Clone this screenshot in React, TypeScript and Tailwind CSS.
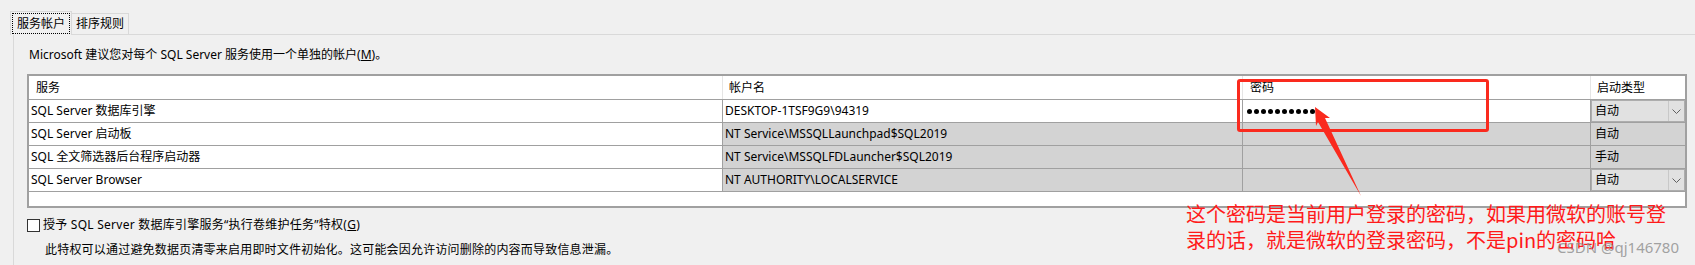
import React from "react";

type Row = {
  svc: string;
  acct: string;
  pwd?: boolean;
  start: string;
  combo?: boolean;
  gray?: boolean;
};

const rows: Row[] = [
  { svc: "SQL Server 数据库引擎", acct: "DESKTOP-1TSF9G9\\94319", pwd: true, start: "自动", combo: true },
  { svc: "SQL Server 启动板", acct: "NT Service\\MSSQLLaunchpad$SQL2019", start: "自动", gray: true },
  { svc: "SQL 全文筛选器后台程序启动器", acct: "NT Service\\MSSQLFDLauncher$SQL2019", start: "手动", gray: true },
  { svc: "SQL Server Browser", acct: "NT AUTHORITY\\LOCALSERVICE", start: "自动", combo: true, gray: true },
];

function Combo({ value }: { value: string }) {
  return (
    <div className="flex h-full w-full border border-[#adadad] bg-[#e1e1e1]">
      <div className="flex flex-1 items-center pl-[3px]">{value}</div>
      <div className="flex w-[16px] items-center justify-center border-l border-[#c8c8c8]">
        <svg width="9" height="5" viewBox="0 0 9 5">
          <path d="M0.5 0.5 L4.5 4.5 L8.5 0.5" fill="none" stroke="#606060" strokeWidth="1" />
        </svg>
      </div>
    </div>
  );
}

function Table() {
  return (
    <div className="flex h-[134px] w-[1660px] flex-col border-2 border-[#a0a0a0] bg-white">
      {/* header */}
      <div className="grid h-[24px] grid-cols-[694px_520px_348px_94px] border-b border-[#a0a0a0]">
        <div className="flex items-center border-r border-[#e5e5e5] pl-[7px]">服务</div>
        <div className="flex items-center border-r border-[#e5e5e5] pl-[6px]">帐户名</div>
        <div className="flex items-center border-r border-[#e5e5e5] pl-[7px]">密码</div>
        <div className="flex items-center pl-[6px]">启动类型</div>
      </div>
      {rows.map((r) => (
        <div
          key={r.svc}
          className="grid h-[23px] grid-cols-[694px_520px_348px_94px] border-b border-[#a0a0a0]"
        >
          <div className="flex items-center border-r border-[#a0a0a0] pl-[2px]">{r.svc}</div>
          <div className={`flex items-center border-r border-[#a0a0a0] pl-[2px] ${r.gray ? "bg-[#d3d3d3]" : ""}`}>
            {r.acct}
          </div>
          <div className={`flex items-center border-r border-[#a0a0a0] pl-[4px] ${r.gray ? "bg-[#d3d3d3]" : ""}`}>
            {r.pwd && (
              <div className="flex gap-[2px]">
                {Array.from({ length: 10 }).map((_, i) => (
                  <span key={i} className="block h-[5px] w-[5px] rounded-full bg-black" />
                ))}
              </div>
            )}
          </div>
          <div className={`flex items-center ${r.gray ? "bg-[#d3d3d3]" : ""}`}>
            {r.combo ? <Combo value={r.start} /> : <span className="pl-[4px]">{r.start}</span>}
          </div>
        </div>
      ))}
    </div>
  );
}

export default function App() {
  return (
    <div className="relative h-[265px] w-[1695px] overflow-hidden bg-[#f0f0f0] font-['Noto_Sans','Noto_Sans_CJK_SC',sans-serif] text-[12px] leading-[16px] text-black">
      {/* tabs */}
      <div className="flex items-end pl-[10px] pt-[11px]">
        <div className="relative z-10 -mb-px h-[24px] w-[62px] border border-b-0 border-[#d9d9d9] bg-[#f0f0f0] p-[1px]">
          <div className="flex h-[21px] items-center justify-center border border-dotted border-black">
            服务帐户
          </div>
        </div>
        <div className="flex h-[21px] w-[57px] items-center justify-center border border-b-0 border-l-0 border-[#d9d9d9]">
          排序规则
        </div>
      </div>

      {/* panel */}
      <div className="ml-[13px] h-[240px] border-l border-t border-[#d9d9d9] pl-[13px]">
        <p className="ml-[2px] mt-[12px]">
          Microsoft 建议您对每个 SQL Server 服务使用一个单独的帐户(<span className="underline">M</span>)。
        </p>
        <div className="mt-[11px]">
          <Table />
        </div>
        <div className="mt-[9px] flex items-center gap-[3px]">
          <span className="block h-[13px] w-[13px] border border-[#333333] bg-white" />
          <span className="tracking-[0.25px]">
            授予 SQL Server 数据库引擎服务“执行卷维护任务”特权(<span className="underline">G</span>)
          </span>
        </div>
        <p className="ml-[18px] mt-[9px] tracking-[0.2px]">
          此特权可以通过避免数据页清零来启用即时文件初始化。这可能会因允许访问删除的内容而导致信息泄漏。
        </p>
      </div>

      {/* annotation overlay */}
      <div className="absolute left-[1237px] top-[79px] h-[53px] w-[252px] rounded-[3px] border-[3px] border-[#fa2a1e]" />
      <svg className="pointer-events-none absolute left-0 top-0" width="1695" height="265">
        <polygon
          points="1315,107 1330,118 1325,118 1361,196 1318,122 1316,126"
          fill="#fa2a1e"
        />
      </svg>
      <div className="absolute left-[1186px] top-[201px] font-['Noto_Sans_CJK_SC',sans-serif] text-[20px] leading-[26px] text-[#ff1a1a]">
        <div>这个密码是当前用户登录的密码，如果用微软的账号登</div>
        <div>录的话，就是微软的登录密码，不是pin的密码哈</div>
      </div>
      <div className="absolute left-[1557px] top-[238px] font-['Noto_Sans',sans-serif] text-[15px] leading-[18px] text-[#8c8c8c]/80">
        CSDN @qj146780
      </div>
    </div>
  );
}
